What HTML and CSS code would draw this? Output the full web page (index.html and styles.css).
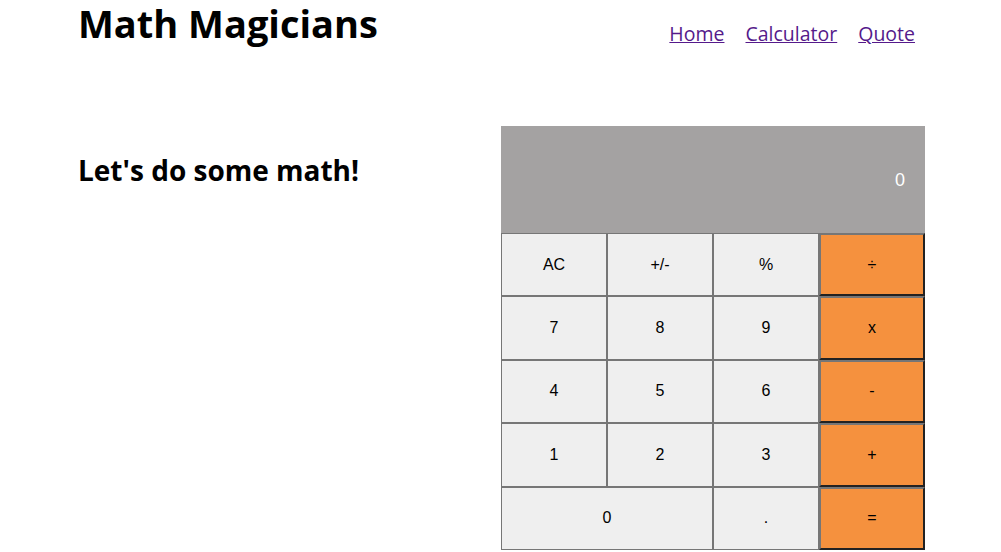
FILE: index.html
```html
<!DOCTYPE html>
<html lang="en">
<head>
    <meta charset="UTF-8">
    <meta name="viewport" content="width=device-width, initial-scale=1.0">
    <title>Math Magicians</title>
    <link rel="stylesheet" href="styles.css">
</head>

<body>
    <header class="header">
        <h1 class="logo">Math Magicians</h1>
        <nav class="nav">
            <a href="#" class="nav-link">Home</a>
            <a href="#" class="nav-link">Calculator</a>
            <a href="#" class="nav-link">Quote</a>
        </nav>
    </header>

    <main class="main">
        <h2 class="intro">Let's do some math!</h2>

        <!-- calculator -->
        <div class="calculator">
            <div class="display">0</div>
            <div class="keys">
                <button class="key">AC</button>
                <button class="key">+/-</button>
                <button class="key">%</button>
                <button class="key key-op">÷</button>
                <button class="key">7</button>
                <button class="key">8</button>
                <button class="key">9</button>
                <button class="key key-op">x</button>
                <button class="key">4</button>
                <button class="key">5</button>
                <button class="key">6</button>
                <button class="key key-op">-</button>
                <button class="key">1</button>
                <button class="key">2</button>
                <button class="key">3</button>
                <button class="key key-op">+</button>
                <button class="key key-zero">0</button>
                <button class="key">.</button>
                <button class="key key-op">=</button>
            </div>
        </div>
    </main>
</body>
</html>
```

FILE: styles.css
```css
body {
    font-family: 'Open Sans', 'Noto Sans', sans-serif;
    background-color: #ffffff;
    color: #000;
    margin: 0;
    padding: 0;
}

.header {
    display: flex;
    justify-content: space-between;
    align-items: flex-start;
    height: 47px;
    padding: 0 86px 0 78px;
}

.logo {
    font-size: 38px;
    font-weight: 700;
    margin: 0;
    line-height: 46px;
}

.nav {
    display: flex;
    gap: 21px;
    padding-top: 20px;
}

.nav-link {
    font-size: 19.5px;
    color: #551a8b;
}

.main {
    display: flex;
    justify-content: space-between;
    align-items: flex-start;
    padding: 79px 76px 0 78px;
}

.intro {
    font-size: 28px;
    font-weight: 700;
    margin: 25px 0 0;
}

/* calculator */
.calculator {
    width: 424px;
}

.display {
    background-color: #a4a2a2;
    color: #fff;
    font-family: 'Liberation Sans', Arial, sans-serif;
    font-size: 18px;
    height: 107px;
    display: flex;
    align-items: center;
    justify-content: flex-end;
    padding-right: 20px;
    padding-top: 2px;
    box-sizing: border-box;
}

.keys {
    display: grid;
    grid-template-columns: repeat(4, 1fr);
    grid-auto-rows: 63.4px;
}

.key {
    font-family: 'Liberation Sans', Arial, sans-serif;
    font-size: 16px;
    color: #000;
    background-color: #efefef;
    border: 1px solid #767676;
    padding: 0;
    margin: 0;
}

.key-op {
    background-color: #f5913e;
    border: 2px solid;
    border-color: #767676 #222 #222 #767676;
}

.key-zero {
    grid-column: span 2;
}
```
